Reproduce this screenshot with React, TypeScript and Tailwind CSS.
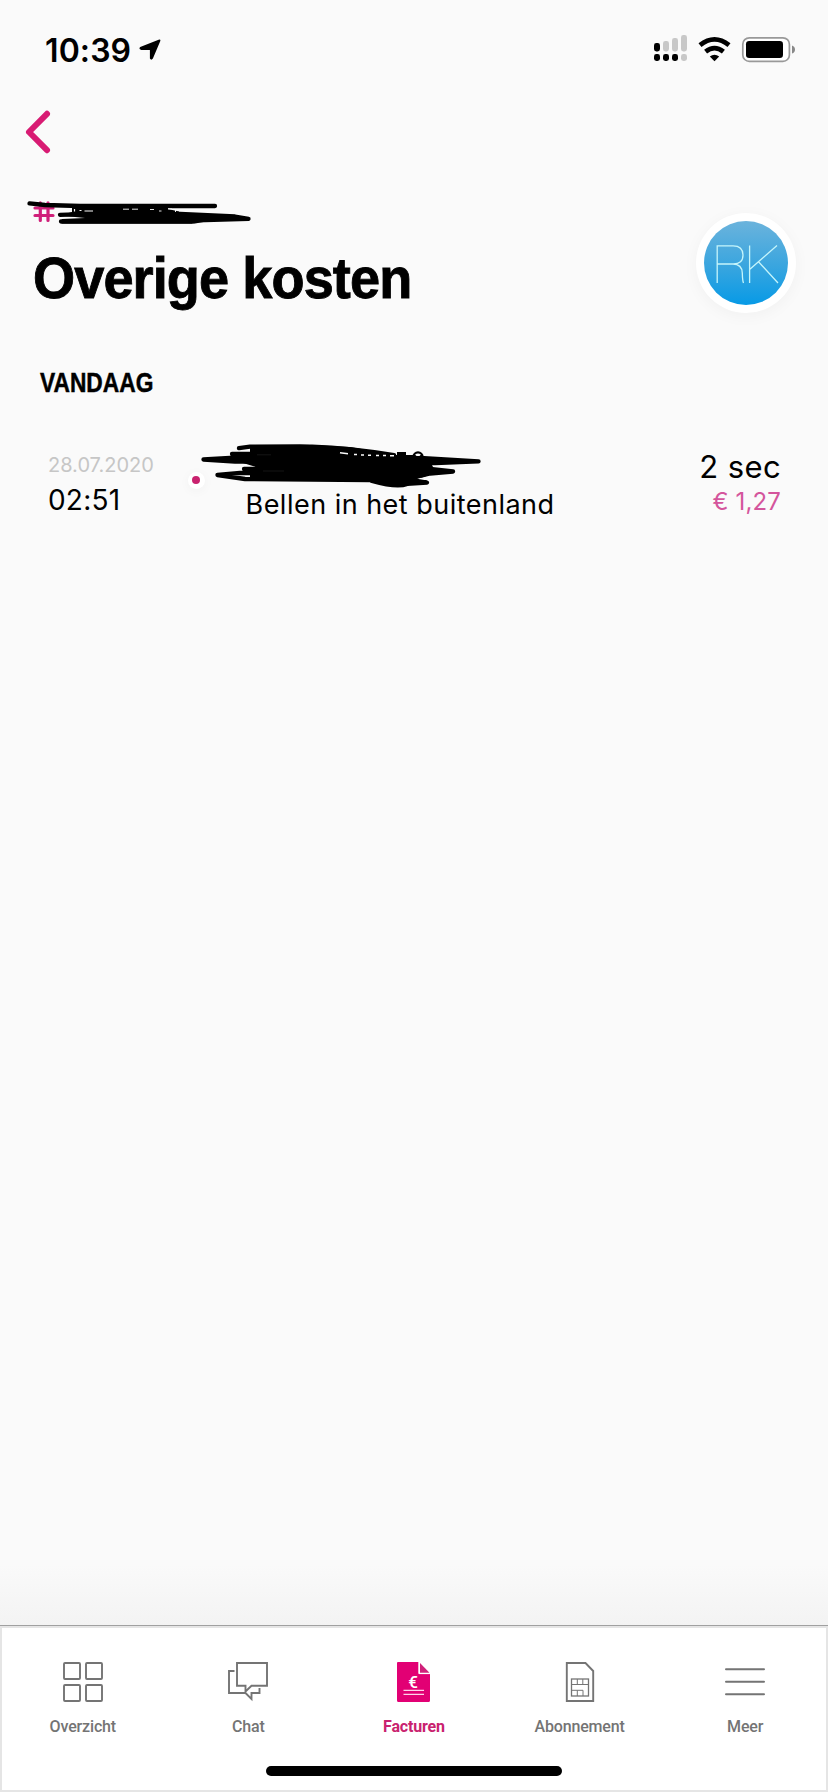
import type { ReactNode } from "react";

function StatusBar() {
  return (
    <div className="flex h-[98px] items-center pl-[45px] pr-[33px]">
      <span className="mt-[3px] w-[94px] whitespace-nowrap font-['Inter',sans-serif] text-[32px] font-semibold leading-none tracking-[0.1px]">
        10:39
      </span>
      <svg className="mt-[2px]" width="22" height="22" viewBox="0 0 22 22">
        <path d="M1.2 8 19.6 .8Q22 0 21.2 2.2L13.9 19.6Q12.2 21.8 10.9 19.6V11H2.3Q-.8 9.9 1.2 8Z" fill="#000" />
      </svg>
      <svg className="ml-auto" width="142" height="28" viewBox="652 35 142 28">
        <g fill="#c8c8c8">
          <rect x="662" y="41" width="6" height="10.5" rx="2.4" />
          <rect x="671" y="38" width="6" height="13.5" rx="2.4" />
          <rect x="680" y="35" width="6" height="16.5" rx="2.4" />
          <rect x="680" y="54" width="6" height="7" rx="2.4" />
        </g>
        <g fill="#000">
          <rect x="653" y="43" width="6" height="8.5" rx="2.4" />
          <rect x="653" y="54" width="6" height="7" rx="2.4" />
          <rect x="662" y="54" width="6" height="7" rx="2.4" />
          <rect x="671" y="54" width="6" height="7" rx="2.4" />
          <path d="M708.8 56.6Q713.5 52.8 718.2 56.6L713.5 61.2Z" />
        </g>
        <g fill="none" stroke="#000" strokeWidth="4.8">
          <path d="M699 45.2Q713.5 33.6 728 45.2" />
          <path d="M704.6 51.6Q713.5 44.6 722.4 51.6" />
        </g>
        <rect x="741.8" y="37.8" width="46.6" height="23.6" rx="6.5" fill="#fff" stroke="#999" strokeWidth="1.7" />
        <rect x="745" y="41" width="37" height="17" rx="3.2" fill="#000" />
        <path d="M791 45.5Q794 46.5 794 49.5T791 53.5Z" fill="#888" />
      </svg>
    </div>
  );
}

function NumberScribble() {
  return (
    <svg className="absolute left-0 top-0" width="260" height="40" viewBox="0 195 260 40">
      <g stroke="#d0207a" strokeWidth="3.2" strokeLinecap="round">
        <path d="M40.3 202.8V220.5M48 202.8V220.5M35 208H53M35 215.5H53" />
      </g>
      <path d="M72 206H168V209L179 211.5 179 214 235 216.5 215 220 195 223.5H62L62 219 85 218 60 215.5 72 212Z" fill="#000" />
      <g fill="none" stroke="#000" strokeWidth="4.3" strokeLinecap="round" strokeLinejoin="round">
        <path d="M29.5 203.4 45 205 80 206H215" />
        <path d="M60 214.8 120 213 180 214 235 216.5 248.5 218.8 205 220 61 221.5H192L208 219" />
      </g>
      <g fill="none" stroke="#fafafa" strokeWidth="1.2">
        <path d="M74.5 209V211.5M79.5 210.5H81.5M84.5 211H93" />
        <path d="M123 209.2H129M132 209.2H138M150 209.5H154M159 211H161.5" strokeWidth=".9" />
        <path d="M168 209H172M175.5 209V212" strokeWidth=".9" />
      </g>
    </svg>
  );
}

function ContactScribble() {
  return (
    <svg className="absolute left-0 top-0" width="500" height="70" viewBox="0 430 500 70">
      <path
        d="M250 445 300 444.5 350 447 396 455H422L432 465 436 473 420 478 400 485 380 484 365 481H250V473L262 469 243 463V457L250 453Z"
        fill="#000"
      />
      <g fill="none" stroke="#000" strokeWidth="4.3" strokeLinecap="round" strokeLinejoin="round">
        <path d="M239 448.2 250 446.6 312 446.6Q350 448 394 455" />
        <path d="M232 454H285M203.5 459.5 230 458H420L478.5 461.3 435 463 300 462 235 461.5Z" />
        <path d="M244 469H430L453 471.5 430 473.5 422 475.5 240 473 217.5 475 245 479 370 480 395 484.5 427 482.5 400 478" />
        <path d="M372 481Q397 488 407 484" />
      </g>
      <path d="M397 452H406V456H397Z" fill="#000" />
      <circle cx="418" cy="457" r="4.6" fill="none" stroke="#000" strokeWidth="2.2" />
      <path d="M415.5 456Q418 452.5 420.5 456Z" fill="#fafafa" />
      <g fill="none" stroke="#fafafa" strokeWidth="1.4">
        <path d="M340 452.8 348 453.8M354 454.5H357M361 455H364M368 455.3H371M376 455.5H379M383 455.5H386M390 455.8H394" />
      </g>
      <path d="M257 454.8H271M263 471H284" stroke="#242424" strokeWidth=".6" />
    </svg>
  );
}

function Avatar() {
  return (
    <div className="mt-[18px] flex h-[100px] w-[100px] items-center justify-center rounded-full bg-white shadow-[0_3px_16px_rgba(0,0,0,0.04)]">
      <svg width="84" height="84" viewBox="0 0 84 84">
        <defs>
          <linearGradient id="avatarFill" x1="0" y1="0" x2="0" y2="1">
            <stop offset="0" stopColor="#6bb3dc" />
            <stop offset=".55" stopColor="#38a5df" />
            <stop offset="1" stopColor="#079ae6" />
          </linearGradient>
        </defs>
        <circle cx="42" cy="42" r="42" fill="url(#avatarFill)" />
        <g fill="none" stroke="#c5f5fb" strokeWidth="1.3">
          <path d="M13.2 62V24.8H29Q39 24.8 39 34T29 43H13.2M29 43Q38 43.2 38.3 52 38.5 60 39.5 62" />
          <path d="M45.6 24.5V62M73 24.5 45.6 48.5M54.5 40.7 74 62" />
        </g>
      </svg>
    </div>
  );
}

function NavItem({ label, active, children }: { label: string; active?: boolean; children: ReactNode }) {
  return (
    <div className={active ? "flex flex-1 flex-col items-center text-[#c9226f]" : "flex flex-1 flex-col items-center text-[#747474]"}>
      <svg width="40" height="40" viewBox="0 0 40 40" fill="none" stroke="currentColor" strokeWidth="1.9">
        {children}
      </svg>
      <span
        className={
          active
            ? "mt-[15px] whitespace-nowrap font-['Roboto',sans-serif] text-[16px] font-bold leading-5 tracking-[-0.15px]"
            : "mt-[15px] whitespace-nowrap font-['Roboto',sans-serif] text-[16px] font-medium leading-5 tracking-[-0.15px]"
        }
      >
        {label}
      </span>
    </div>
  );
}

function BottomNav() {
  return (
    <nav className="h-[167px] border-t border-[#a0a0a0]">
      <div className="flex h-full flex-col items-center border-2 border-[#e5e5e5] bg-white">
        <div className="flex w-[828px] shrink-0 pt-[34px]">
          <NavItem label="Overzicht">
            <rect x="1" y="1" width="16" height="16" rx="1" />
            <rect x="23" y="1" width="16" height="16" rx="1" />
            <rect x="1" y="23" width="16" height="16" rx="1" />
            <rect x="23" y="23" width="16" height="16" rx="1" />
          </NavItem>
          <NavItem label="Chat">
            <path d="M9 1H39V23.7H23.5L17.5 29.5V23.7H9Z" />
            <path d="M6.5 9H1V31H17.5L23.5 37V31H31.5V26" />
          </NavItem>
          <NavItem label="Facturen" active>
            <path d="M4 0H25V12H36V38.5Q36 40 34.5 40H4.5Q3 40 3 38.5V1Q3 0 4 0Z" fill="#e20074" stroke="none" />
            <path d="M26 1 35.5 10.7H26Z" fill="#d0207a" stroke="none" />
            <path d="M24.8 0V11.6H36" stroke="#fff" strokeWidth="1" />
            <path d="M9.5 28.3H30M9.5 32.3H30" stroke="#ffd2e8" strokeWidth="1.3" />
            <text x="19" y="25.5" textAnchor="middle" fill="#fff" stroke="none" className="font-['Roboto',sans-serif] text-[17px] font-medium">
              €
            </text>
          </NavItem>
          <NavItem label="Abonnement">
            <path d="M6.8 1H25.5L33.2 9V39H6.8Z" />
            <rect x="11.5" y="17" width="17" height="17" strokeWidth="1.3" />
            <path d="M11.5 22.5H28.5M17.3 17V22.5M22.8 17V22.5M11.5 28.3H23V34M17.3 28.3V34" strokeWidth="1" />
          </NavItem>
          <NavItem label="Meer">
            <path d="M1 7.3H39M1 19.7H39M1 32.2H39" strokeWidth="2" strokeLinecap="round" />
          </NavItem>
        </div>
        <div className="mt-[29px] h-[10px] w-[296px] shrink-0 rounded-full bg-black" />
      </div>
    </nav>
  );
}

export default function App() {
  return (
    <div className="flex h-[1792px] w-[828px] flex-col overflow-hidden bg-[#fafafa] font-['Inter',sans-serif] text-black">
      <StatusBar />
      <div className="h-[97px] pl-[24px] pt-[11px]">
        <svg width="28" height="46" viewBox="0 0 28 46">
          <path d="M23 4.8 5 23 23 41.2" fill="none" stroke="#d81b73" strokeWidth="6" strokeLinecap="round" strokeLinejoin="round" />
        </svg>
      </div>
      <header className="relative flex h-[173px] justify-between pr-[32px]">
        <NumberScribble />
        <h1 className="ml-[32.5px] mt-[53px] h-[60px] origin-left scale-x-[0.934] whitespace-nowrap font-['Liberation_Sans',sans-serif] text-[58px] font-bold leading-[60px] tracking-[-1px] [-webkit-text-stroke:0.9px_black]">
          Overige kosten
        </h1>
        <Avatar />
      </header>
      <h2 className="ml-[40px] h-[62px] origin-left scale-x-[0.843] font-['Liberation_Sans',sans-serif] text-[27px] font-bold leading-[30px] [-webkit-text-stroke:0.5px_black]">
        VANDAAG
      </h2>
      <section className="relative flex h-[100px] pl-[48px] pr-[48px]">
        <div className="w-[139.5px] pt-[23px]">
          <div className="text-[20px] leading-6 text-[#c6c6c6]">28.07.2020</div>
          <div className="mt-[8px] text-[28px] leading-[30px] tracking-[0.2px]">02:51</div>
        </div>
        <div className="mt-[41.5px] flex h-[17px] w-[17px] items-center justify-center rounded-full bg-white shadow-[0_2px_12px_rgba(0,0,0,0.04)]">
          <div className="h-2 w-2 rounded-full bg-[#c9226f]" />
        </div>
        <div className="ml-[41px] whitespace-nowrap pt-[60px] text-[27px] leading-[30px] tracking-[0.48px]">Bellen in het buitenland</div>
        <div className="ml-auto whitespace-nowrap pt-5 text-right">
          <div className="-mr-px text-[31px] leading-[34px] tracking-[0.4px]">2 sec</div>
          <div className="-mr-px mt-[3px] text-[24px] leading-[30px] tracking-[0.15px] text-[#d4559c]">€ 1,27</div>
        </div>
        <ContactScribble />
      </section>
      <div className="flex-1" />
      <div className="h-[60px] bg-gradient-to-b from-[#fafafa] to-[#f3f3f3]" />
      <BottomNav />
    </div>
  );
}
